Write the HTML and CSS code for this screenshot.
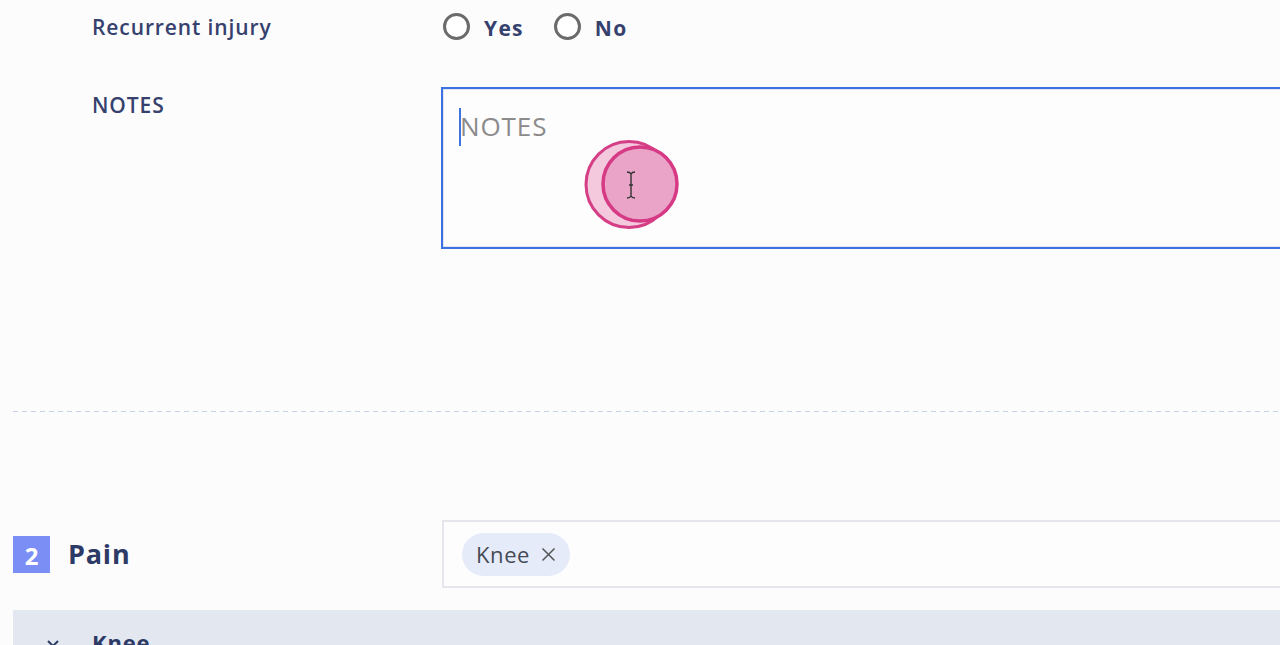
FILE: index.html
```html
<!DOCTYPE html>
<html lang="en">
<head>
<meta charset="utf-8">
<title>Injury form</title>
<link rel="stylesheet" href="styles.css">
</head>
<body>
<div class="page">
  <div class="section">
    <div class="row row-radio">
      <div class="label">Recurrent injury</div>
      <div class="field radios">
        <label class="radio"><span class="circle"></span><span class="rtext">Yes</span></label>
        <label class="radio"><span class="circle"></span><span class="rtext">No</span></label>
      </div>
    </div>
    <div class="row row-notes">
      <div class="label">NOTES</div>
      <div class="field">
        <div class="textarea">
          <span class="caret"></span><span class="placeholder">NOTES</span>
        </div>
      </div>
    </div>
    <div class="divider"></div>
    <div class="row row-pain">
      <div class="title"><span class="badge">2</span><span class="title-text">Pain</span></div>
      <div class="field">
        <div class="multiselect">
          <span class="chip">Knee <svg class="chip-x" width="15" height="15" viewBox="0 0 15 15"><path d="M1.5 1.5 L13.5 13.5 M13.5 1.5 L1.5 13.5" stroke="#555" stroke-width="1.5" fill="none"/></svg></span>
        </div>
      </div>
    </div>
    <div class="accordion">
      <svg class="chev" width="14" height="10" viewBox="0 0 14 10"><path d="M2 2 L7 7 L12 2" fill="none" stroke="#2c3a66" stroke-width="2"/></svg>
      <span class="acc-title">Knee</span>
    </div>
  </div>
  <svg class="touch" width="100" height="94" viewBox="0 0 100 94">
    <circle cx="46" cy="45.5" r="43" fill="#f4c9de" stroke="#d43f86" stroke-width="3"/>
    <circle cx="57" cy="45" r="37" fill="#eaa4c7" stroke="#d63a85" stroke-width="3.5"/>
    <path d="M44 33 q3 0 4 2 q1 -2 4 -2 M48 35 v22 M44 59 q3 0 4 -2 q1 2 4 2 M46 46 h4" stroke="#333" stroke-width="1.4" fill="none"/>
  </svg>
</div>
</body>
</html>
```

FILE: styles.css
```css
html, body {
  margin: 0;
  padding: 0;
  background: #fcfcfd;
  overflow: hidden;
}
body {
  font-family: "Open Sans", "Liberation Sans", sans-serif;
  color: #36416d;
}
.page {
  position: relative;
  width: 1280px;
  height: 645px;
  overflow: hidden;
}
.section {
  padding-left: 13px;
}
.row {
  display: grid;
  grid-template-columns: 428px 1000px;
}
.label {
  padding-left: 79px;
  font-size: 21px;
  font-weight: 600;
  letter-spacing: 0.9px;
}
.row-radio {
  height: 52px;
  align-items: center;
}
.row-radio .label {
  padding-top: 2px;
}
.radios {
  display: flex;
  gap: 30px;
  align-items: center;
  padding-left: 2px;
}
.radio {
  display: flex;
  align-items: center;
  gap: 14px;
}
.circle {
  width: 21px;
  height: 21px;
  border: 3px solid #6b6b6b;
  border-radius: 50%;
  background: #fff;
}
.rtext {
  font-size: 21px;
  font-weight: 700;
  letter-spacing: 1.3px;
  padding-top: 3px;
}
.row-notes {
  margin-top: 35px;
}
.row-notes .label {
  padding-top: 4px;
}
.textarea {
  border: 2px solid #3b71e3;
  box-shadow: inset 0 0 0 1px #e2e5ee;
  background: #fdfdfe;
  display: flex;
  align-items: flex-start;
  padding: 18px 0 0 16px;
  box-sizing: border-box;
  height: 162px;
}
.caret {
  width: 2px;
  height: 38px;
  background: #3f74e0;
  margin-top: 1px;
}
.placeholder {
  font-size: 26px;
  color: #8b8b8b;
  line-height: 38px;
  margin-left: -1px;
  letter-spacing: 0.9px;
}
.divider {
  margin-top: 162px;
  height: 1px;
  background: repeating-linear-gradient(to right, #c6d1e8 0 5px, transparent 5px 9px);
}
.row-pain {
  margin-top: 108px;
  align-items: center;
}
.title {
  display: flex;
  align-items: center;
  gap: 18px;
}
.badge {
  width: 37px;
  height: 37px;
  background: #7b8ef5;
  color: #fff;
  font-size: 24px;
  font-weight: 700;
  display: flex;
  align-items: flex-end;
  justify-content: center;
  line-height: 34px;
}
.title-text {
  font-size: 27px;
  font-weight: 700;
  letter-spacing: 0.8px;
  color: #2e3a66;
  margin-top: -2px;
}
.multiselect {
  height: 68px;
  border: 2px solid #e4e6ec;
  box-sizing: border-box;
  display: flex;
  align-items: center;
  padding-left: 18px;
  margin-left: 1px;
  background: #fdfdfe;
}
.chip {
  display: inline-flex;
  align-items: center;
  height: 43px;
  padding: 0 14px 0 14px;
  border-radius: 22px;
  background: #e6ebfa;
  color: #454a55;
  font-size: 22px;
  letter-spacing: 0.6px;
  gap: 11px;
}
.chip-x {
  margin-top: 1px;
}
.accordion {
  margin-top: 22px;
  height: 60px;
  background: #e3e7f0;
  display: flex;
  align-items: flex-start;
  padding-top: 17px;
  box-sizing: border-box;
}
.chev {
  margin-left: 33px;
  margin-top: 12px;
}
.acc-title {
  margin-left: 32px;
  font-size: 22px;
  font-weight: 700;
  letter-spacing: 0.8px;
  color: #2e3a66;
}
.touch {
  position: absolute;
  left: 583px;
  top: 139px;
}
```
